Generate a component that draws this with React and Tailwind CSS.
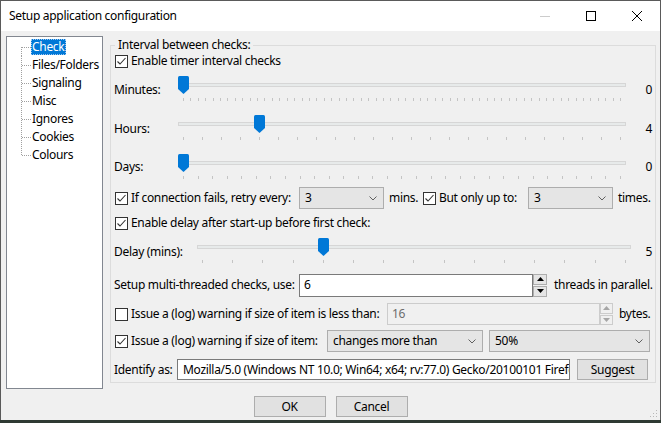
import React from 'react'

const treeItems = ['Check', 'Files/Folders', 'Signaling', 'Misc', 'Ignores', 'Cookies', 'Colours']

function CheckBox({ checked }) {
  return (
    <span className="flex h-[13px] w-[13px] shrink-0 items-center justify-center border border-[#333333] bg-white">
      {checked && (
        <svg width="11" height="11" viewBox="0 0 11 11">
          <path d="M1.5 5.5 L4 8 L9.5 2" fill="none" stroke="#333333" strokeWidth="1.1" />
        </svg>
      )}
    </span>
  )
}

function Chevron() {
  return (
    <svg width="8" height="5" viewBox="0 0 8 5">
      <path d="M0.5 0.5 L4 4 L7.5 0.5" fill="none" stroke="#606060" />
    </svg>
  )
}

function Combo({ value, className }) {
  return (
    <div className={`flex h-[22px] shrink-0 items-center justify-between border border-[#adadad] bg-[#e5e5e5] pl-[5px] pr-[6px] ${className}`}>
      <span className="whitespace-nowrap">{value}</span>
      <Chevron />
    </div>
  )
}

function TextBox({ value, className, disabled }) {
  return (
    <div
      className={`flex shrink-0 items-center overflow-hidden whitespace-nowrap border ${
        disabled ? 'border-[#cccccc] bg-[#f0f0f0] text-[#6d6d6d]' : 'border-[#7a7a7a] bg-white'
      } ${className}`}
    >
      {value}
    </div>
  )
}

function Spinner({ disabled, className }) {
  const c = disabled ? '#a6a6a6' : '#000000'
  return (
    <div className={`flex shrink-0 flex-col gap-[1px] ${className}`}>
      <div className={`flex flex-1 items-center justify-center border ${disabled ? 'border-[#cccccc] bg-[#f0f0f0]' : 'border-[#adadad] bg-[#e5e5e5]'}`}>
        <svg width="7" height="4" viewBox="0 0 7 4">
          <path d="M0 4 L3.5 0 L7 4 Z" fill={c} />
        </svg>
      </div>
      <div className={`flex flex-1 items-center justify-center border ${disabled ? 'border-[#cccccc] bg-[#f0f0f0]' : 'border-[#adadad] bg-[#e5e5e5]'}`}>
        <svg width="7" height="4" viewBox="0 0 7 4">
          <path d="M0 0 L3.5 4 L7 0 Z" fill={c} />
        </svg>
      </div>
    </div>
  )
}

function Thumb() {
  return (
    <svg width="11" height="18" viewBox="0 0 11 18">
      <path d="M0 1.5 Q0 0 1.5 0 H9.5 Q11 0 11 1.5 V13 L5.5 18 L0 13 Z" fill="#0078d7" />
    </svg>
  )
}

function Slider({ ticks, value, min = 0, max, className, trackPad }) {
  const frac = (value - min) / (max - min)
  return (
    <div className={`relative h-full shrink-0 ${trackPad} ${className}`}>
      <div className="h-[4px] border border-[#d6d6d6] bg-[#e7eaea]" />
      <div className="mx-[5px] mt-[11px] flex justify-between">
        {Array.from({ length: ticks }).map((_, i) => (
          <span key={i} className="h-[3px] w-px bg-[#c4c4c4]" />
        ))}
      </div>
      <div className="absolute" style={{ left: `calc((100% - 11px) * ${frac})`, top: 0 }}>
        <div className={trackPad}>
          <div className="-mt-[7px]">
            <Thumb />
          </div>
        </div>
      </div>
    </div>
  )
}

function SliderRow({ label, labelW, sliderW, rowH, trackPad, ticks, value, min, max }) {
  return (
    <div className={`flex items-center ${rowH}`}>
      <span className={`shrink-0 ${labelW}`}>{label}</span>
      <Slider ticks={ticks} value={value} min={min} max={max} className={sliderW} trackPad={trackPad} />
      <span className="flex-1 pr-[3px] text-right">{value}</span>
    </div>
  )
}

function Tree() {
  return (
    <div className="h-[353px] w-[97px] shrink-0 border border-[#828790] bg-white pt-[1px]">
      {treeItems.map((item, i) => (
        <div key={item} className="flex h-[18px] items-center">
          <svg className="ml-[14px] shrink-0" width="10" height="18" viewBox="0 0 10 18">
            <line
              x1="0.5"
              y1={i === 0 ? 9 : 0}
              x2="0.5"
              y2={i === treeItems.length - 1 ? 10 : 18}
              stroke="#a0a0a0"
              strokeDasharray="1 1"
            />
            <line x1="1" y1="9.5" x2="10" y2="9.5" stroke="#a0a0a0" strokeDasharray="1 1" />
          </svg>
          <span
            className={`flex h-[16px] items-center whitespace-nowrap pl-[1px] pr-[2px] ${
              i === 0 ? 'bg-[#0078d7] text-white outline-1 outline-dotted outline-offset-[-1px] outline-[#9fc7ee]' : ''
            }`}
          >
            {item}
          </span>
        </div>
      ))}
    </div>
  )
}

function Settings() {
  return (
    <fieldset className="mt-[1px] w-[546px] shrink-0 border border-[#dcdcdc] pl-[3px]">
      <legend className="ml-[1px] px-[3px] leading-[16px]">Interval between checks:</legend>

      <div className="flex h-[16px] items-center pl-[1px]">
        <CheckBox checked />
        <span className="ml-[3px]">Enable timer interval checks</span>
      </div>

      <div className="mt-[1px]">
        <SliderRow label="Minutes:" labelW="w-[64px]" sliderW="w-[448px]" rowH="h-[39px]" trackPad="pt-[13px]" ticks={60} value={0} max={59} />
        <SliderRow label="Hours:" labelW="w-[64px]" sliderW="w-[448px]" rowH="h-[39px]" trackPad="pt-[13px]" ticks={24} value={4} max={23} />
        <SliderRow label="Days:" labelW="w-[64px]" sliderW="w-[448px]" rowH="h-[38px]" trackPad="pt-[13px]" ticks={31} value={0} max={30} />
      </div>

      <div className="flex h-[24px] items-center whitespace-nowrap pl-[1px]">
        <CheckBox checked />
        <span className="ml-[3px] w-[168px] shrink-0">If connection fails, retry every:</span>
        <Combo value="3" className="w-[85px]" />
        <span className="ml-[5px] w-[34px] shrink-0">mins.</span>
        <CheckBox checked />
        <span className="ml-[3px] w-[89px] shrink-0">But only up to:</span>
        <Combo value="3" className="w-[85px]" />
        <span className="ml-[5px]">times.</span>
      </div>

      <div className="flex h-[26px] items-center pl-[1px]">
        <CheckBox checked />
        <span className="ml-[3px]">Enable delay after start-up before first check:</span>
      </div>

      <SliderRow label="Delay (mins):" labelW="w-[83px]" sliderW="w-[434px]" rowH="h-[31px]" trackPad="pt-[9px]" ticks={15} value={5} min={1} max={15} />

      <div className="flex h-[36px] items-center whitespace-nowrap">
        <span className="w-[185px] shrink-0">Setup multi-threaded checks, use:</span>
        <TextBox value="6" className="h-[23px] w-[234px] pl-[4px]" />
        <Spinner className="h-[23px] w-[14px]" />
        <span className="ml-[7px]">threads in parallel.</span>
      </div>

      <div className="flex h-[22px] items-center whitespace-nowrap pl-[1px]">
        <CheckBox />
        <span className="ml-[3px] w-[256px] shrink-0">Issue a (log) warning if size of item is less than:</span>
        <TextBox value="16" disabled className="h-[22px] w-[213px] pl-[4px]" />
        <Spinner disabled className="h-[22px] w-[13px]" />
        <span className="ml-[6px]">bytes.</span>
      </div>

      <div className="flex h-[32px] items-center whitespace-nowrap pl-[1px]">
        <CheckBox checked />
        <span className="ml-[3px] w-[196px] shrink-0">Issue a (log) warning if size of item:</span>
        <Combo value="changes more than" className="w-[156px]" />
        <Combo value="50%" className="ml-[6px] w-[161px]" />
      </div>

      <div className="flex h-[25px] items-center whitespace-nowrap">
        <span className="w-[63px] shrink-0">Identify as:</span>
        <TextBox
          value="Mozilla/5.0 (Windows NT 10.0; Win64; x64; rv:77.0) Gecko/20100101 Firefox/77.0"
          className="h-[21px] w-[393px] pl-[5px]"
        />
        <button className="ml-[7px] h-[21px] w-[71px] border border-[#adadad] bg-[#e1e1e1]">Suggest</button>
      </div>
    </fieldset>
  )
}

function TitleBar() {
  return (
    <div className="flex h-[30px] shrink-0 items-center bg-white">
      <span className="flex-1 pl-[8px]">Setup application configuration</span>
      <div className="flex h-full">
        <div className="flex w-[46px] items-center justify-center">
          <svg width="10" height="10" viewBox="0 0 10 10">
            <line x1="0" y1="5.5" x2="10" y2="5.5" stroke="#cccccc" />
          </svg>
        </div>
        <div className="flex w-[46px] items-center justify-center">
          <svg width="10" height="10" viewBox="0 0 10 10">
            <rect x="0.5" y="0.5" width="9" height="9" fill="none" stroke="#000000" />
          </svg>
        </div>
        <div className="flex w-[46px] items-center justify-center">
          <svg width="10" height="10" viewBox="0 0 10 10">
            <path d="M0 0 L10 10 M10 0 L0 10" stroke="#000000" strokeWidth="1" />
          </svg>
        </div>
      </div>
    </div>
  )
}

export default function App() {
  return (
    <div className="h-[423px] w-[661px] overflow-hidden bg-[#2f3a33] font-['Segoe_UI','Noto_Sans',sans-serif] text-[12px] tracking-[-0.3px] text-black">
      <div className="relative flex h-[420px] flex-col border-x border-t border-[#5a5a5a] bg-[#f0f0f0]">
        <TitleBar />
        <div className="flex items-start gap-[7px] pl-[5px] pt-[5px]">
          <Tree />
          <Settings />
        </div>
        <div className="mt-[7px] flex justify-center gap-[10px]">
          <button className="h-[21px] w-[72px] border border-[#adadad] bg-[#e1e1e1]">OK</button>
          <button className="h-[21px] w-[72px] border border-[#adadad] bg-[#e1e1e1]">Cancel</button>
        </div>
        <svg className="absolute bottom-[2px] right-[2px]" width="10" height="10" viewBox="0 0 10 10">
          <rect x="8" y="2" width="1" height="1" fill="#b8b8b8" />
          <rect x="5" y="5" width="1" height="1" fill="#b8b8b8" />
          <rect x="8" y="5" width="1" height="1" fill="#b8b8b8" />
          <rect x="2" y="8" width="1" height="1" fill="#b8b8b8" />
          <rect x="5" y="8" width="1" height="1" fill="#b8b8b8" />
          <rect x="8" y="8" width="1" height="1" fill="#b8b8b8" />
        </svg>
      </div>
    </div>
  )
}
